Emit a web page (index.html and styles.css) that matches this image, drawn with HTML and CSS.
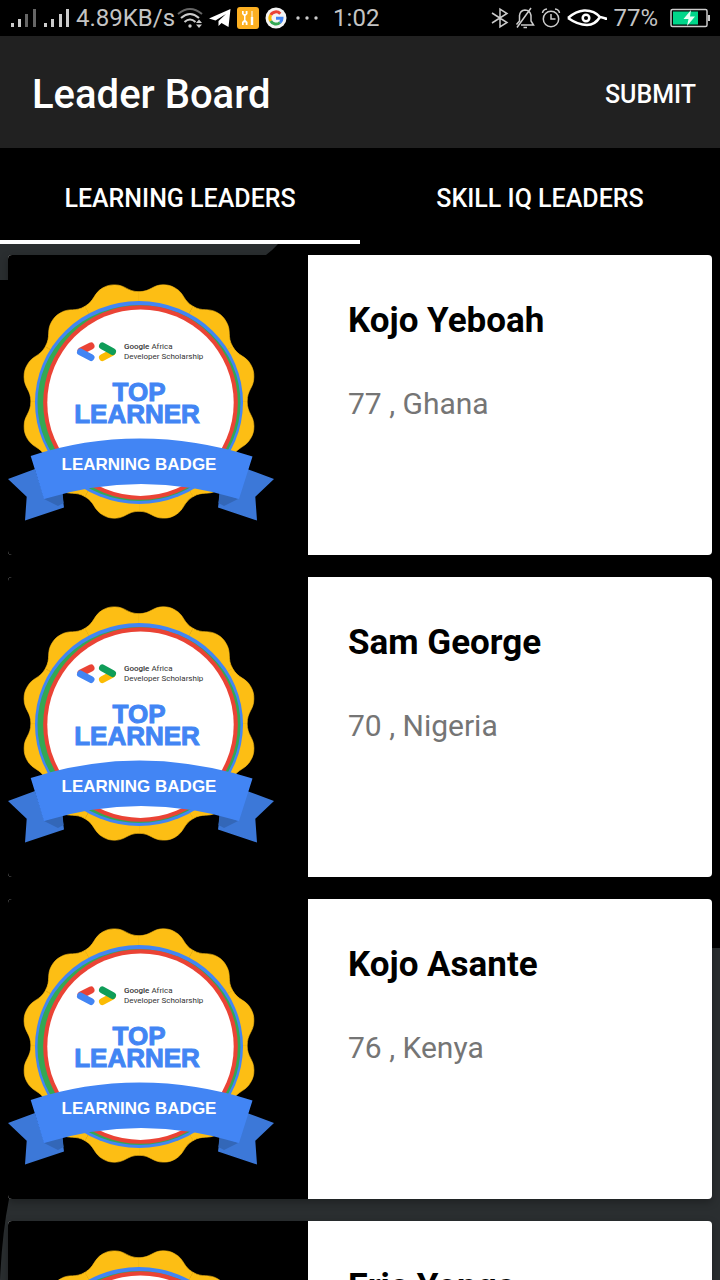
FILE: index.html
```
<!DOCTYPE html>
<html lang="en">
<head>
<meta charset="utf-8">
<meta name="viewport" content="width=device-width, initial-scale=1">
<title>Leader Board</title>
<link rel="stylesheet" href="styles.css">
</head>
<body>
<svg class="defs" aria-hidden="true">
  <defs>
    <path id="lobe" d="M0 0V-111.5C12 -111.5 14 -118.5 25 -118.5C30 -118.5 33.3 -117.6 37.6 -115C47.1 -109.6 45.3 -102.5 55.7 -96.6Z"/>
    <g id="tail">
      <path fill="#3c78d8" d="M0 224L27 214L36 242L54 237L56 252.500L17 265.500L18.700 241.700Z"/>
      <path fill="#3367b8" d="M36 244L54.500 237L55.500 248L50 251Z"/>
    </g>
    <symbol id="badge" viewBox="0 0 300 300">
      <g fill="#fdbe14" stroke="#fdbe14" stroke-width=".6" transform="translate(131 146.500) scale(.97 .985)">
        <use href="#lobe"/><use href="#lobe" transform="rotate(30)"/><use href="#lobe" transform="rotate(60)"/><use href="#lobe" transform="rotate(90)"/><use href="#lobe" transform="rotate(120)"/><use href="#lobe" transform="rotate(150)"/><use href="#lobe" transform="rotate(180)"/><use href="#lobe" transform="rotate(210)"/><use href="#lobe" transform="rotate(240)"/><use href="#lobe" transform="rotate(270)"/><use href="#lobe" transform="rotate(300)"/><use href="#lobe" transform="rotate(330)"/>
      </g>
      <ellipse cx="131" cy="147.500" rx="104" ry="101.500" fill="#4285f4"/>
      <ellipse cx="131" cy="148" rx="101.500" ry="98" fill="#34a853"/>
      <circle cx="132.500" cy="147.500" r="97.300" fill="#ea4335"/>
      <circle cx="132.500" cy="147.700" r="93.200" fill="#fff"/>
      <g fill="none" stroke-width="7" stroke-linecap="round">
        <path stroke="#fbbc04" d="M94.500 102.500L104 97.500"/>
        <path stroke="#0f9d58" d="M94.500 91L104.500 96.500"/>
        <path stroke="#ea4335" d="M83 91L73 96"/>
        <path stroke="#4285f4" d="M72.500 97L83 102.500"/>
      </g>
      <text class="badge-small" x="116" y="94"><tspan class="badge-strong">Google</tspan> Africa</text>
      <text class="badge-small" x="116" y="104">Developer Scholarship</text>
      <text class="badge-title" x="131" y="146">TOP</text>
      <text class="badge-title" x="129" y="168">LEARNER</text>
      <use href="#tail"/>
      <use href="#tail" transform="translate(266 0) scale(-1 1)"/>
      <path fill="#4285f4" d="M22.700 201Q131 166 244.500 201.500L231 244Q133 214 36 244Z"/>
      <text class="badge-ribbon" x="131" y="215">LEARNING BADGE</text>
    </symbol>
  </defs>
</svg>

<div class="screen">
  <div class="status">
    <div class="status-left">
      <svg width="60" height="20" viewBox="0 0 60 20" fill="#ccc" aria-hidden="true">
        <path d="M1 15h3v4H1zM8 11h3v8H8zM34 15h3v4h-3zM41 11h3v8h-3zM49 6h3v13h-3zM56 1h3v18h-3z"/>
        <path fill="#666" d="M15 6h3v13h-3zM23 1h3v18h-3z"/>
      </svg>
      <span class="speed">4.89KB/s</span>
      <svg width="26" height="22" viewBox="0 0 26 22" fill="none" stroke="#ccc" stroke-width="2" aria-hidden="true">
        <path stroke="#666" d="M1 7Q13 -3 25 7"/>
        <path d="M4 11Q13 3 22 11M7.500 15Q13 10 18.500 15"/>
        <circle cx="13" cy="19" r="1.700" fill="#ccc" stroke="none"/>
        <path fill="#ccc" stroke="none" d="M19 16l3-3.500 3 3.500zM19 17.500l3 3.500 3-3.500z"/>
      </svg>
      <svg width="22" height="20" viewBox="0 0 22 20" aria-hidden="true"><path fill="#fff" d="M0 10.500L21.500 1L19.500 19L12.500 15L9.500 18V13L17 6L6.500 12.500Z"/></svg>
      <svg width="22" height="22" viewBox="0 0 22 22" aria-hidden="true">
        <rect width="22" height="22" rx="3" fill="#fdb022"/>
        <path fill="#fff" d="M5 4v3l2 2v4L5 15v3h1.700v-2.500h2V18h1.800v-3l-2-2V9l2-2V4H8.700v3h-2V4zM14.500 4h1v6h-1zM13.800 10h2.400v8h-2.400z"/>
      </svg>
      <svg width="22" height="22" viewBox="0 0 22 22" fill="none" stroke-width="3" aria-hidden="true">
        <circle cx="11" cy="11" r="10.500" fill="#f4f4f4"/>
        <path stroke="#ea4335" d="M5.700 8A6 6 0 0 1 15.300 6.700"/>
        <path stroke="#fbbc05" d="M5.700 8A6 6 0 0 0 5.700 14"/>
        <path stroke="#34a853" d="M5.700 14A6 6 0 0 0 15 15.500"/>
        <path stroke="#4285f4" d="M11 11.200H17Q17 14 15 15.500"/>
      </svg>
      <svg class="more" width="24" height="22" viewBox="0 0 24 22" fill="#ccc" aria-hidden="true"><circle cx="3" cy="11" r="1.700"/><circle cx="12" cy="11" r="1.700"/><circle cx="21" cy="11" r="1.700"/></svg>
      <time>1:02</time>
    </div>
    <div class="status-right">
      <svg width="18" height="22" viewBox="0 0 18 22" fill="none" stroke="#ccc" stroke-width="1.500" aria-hidden="true"><path d="M1 6L16 15.500L9 20V2L16 6.500L1 16"/></svg>
      <svg width="20" height="22" viewBox="0 0 20 22" fill="none" stroke="#ccc" stroke-width="1.500" aria-hidden="true"><path d="M6 18H18.500L16 14V8.500Q15 3 10 3Q5 3.500 4.500 8.500V14L1.500 17.500M8.500 20.500H12M16 1L2 20.500"/></svg>
      <svg width="20" height="22" viewBox="0 0 20 22" fill="none" stroke="#ccc" stroke-width="1.500" aria-hidden="true"><circle cx="10" cy="12" r="7.700"/><path d="M10 7V12H14.500M1.500 6Q2 2.500 6 2M18.500 6Q18 2.500 14 2"/></svg>
      <svg width="40" height="22" viewBox="0 0 40 22" fill="none" stroke="#fff" stroke-width="2.500" aria-hidden="true"><path d="M1 11Q9 4 17 3.500Q27 3 33 10L39 11.500V13M1 11Q11 18 20 18Q28 18 33 10"/><circle cx="19" cy="11" r="3.300"/></svg>
      <span>77%</span>
      <svg class="battery" width="40" height="20" viewBox="0 0 40 20" aria-hidden="true">
        <rect x="1" y="1.500" width="36" height="17" rx="1.500" fill="none" stroke="#ccc" stroke-width="1.500"/>
        <path fill="#00d68a" d="M3 3.500h25v13H3z"/><path fill="#ccc" d="M38 7h2v6h-2z"/>
        <path fill="#e4fff4" d="M21 2L13.500 11H18.500L17 18L25 8.500H20Z"/>
      </svg>
    </div>
  </div>

  <header class="appbar">
    <h1>Leader Board</h1>
    <button type="button">SUBMIT</button>
  </header>

  <nav class="tabs">
    <a class="tab tab-active" href="#learning" aria-current="page">LEARNING LEADERS</a>
    <a class="tab" href="#skill">SKILL IQ LEADERS</a>
  </nav>

  <main class="content" id="learning">
    <svg class="backdrop" viewBox="0 0 720 1036" preserveAspectRatio="none" aria-hidden="true">
      <path fill="#2a2e30" d="M0 0H278Q272 7 262 14V36H0ZM720 704V1036H0Q2 990 9 955L40 704Z"/>
    </svg>
    <ul class="list">
      <li class="card">
        <svg class="badge" role="img" aria-label="Top Learner badge"><use href="#badge"/></svg>
        <div class="info"><h2>Kojo Yeboah</h2><p>77 , Ghana</p></div>
      </li>
      <li class="card">
        <svg class="badge" role="img" aria-label="Top Learner badge"><use href="#badge"/></svg>
        <div class="info"><h2>Sam George</h2><p>70 , Nigeria</p></div>
      </li>
      <li class="card">
        <svg class="badge" role="img" aria-label="Top Learner badge"><use href="#badge"/></svg>
        <div class="info"><h2>Kojo Asante</h2><p>76 , Kenya</p></div>
      </li>
      <li class="card">
        <svg class="badge" role="img" aria-label="Top Learner badge"><use href="#badge"/></svg>
        <div class="info"><h2>Eric Yonga</h2></div>
      </li>
    </ul>
  </main>
</div>
</body>
</html>
```
FILE: styles.css
```
* { box-sizing: border-box; }
body { margin: 0; background: #000; font-family: Roboto, "Noto Sans", sans-serif; }
h1, h2, p { margin: 0; }
.defs { position: absolute; width: 0; height: 0; }

.screen { display: flex; flex-direction: column; height: 100vh; overflow: hidden; }

.status {
  display: flex; justify-content: space-between; align-items: center;
  height: 36px; padding: 0 10px; flex: none;
  color: #c4c4c4; font-size: 24px; line-height: 36px;
}
.status svg { flex: none; }
.status-left, .status-right { display: flex; align-items: center; gap: 6px; }
.status .speed { margin-right: -4px; }
.status .more { margin-left: 2px; }
.status-left time { margin-left: 8px; }
.status .battery { margin-left: 6px; }

.appbar {
  display: flex; justify-content: space-between; align-items: center;
  height: 112px; padding: 6px 24px 0 32px; flex: none;
  background: #212121; color: #fff;
}
.appbar h1 { font-size: 40px; font-weight: 500; line-height: 48px; }
.appbar button {
  padding: 0; border: 0; background: none; color: #fff;
  font-family: inherit; font-size: 25px; font-weight: 500; line-height: 32px;
}

.tabs { display: grid; grid-template-columns: 1fr 1fr; height: 96px; flex: none; }
.tab {
  display: flex; align-items: center; justify-content: center;
  padding-top: 8px; border-bottom: 4px solid transparent;
  color: #fff; font-size: 25px; font-weight: 500; text-decoration: none;
}
.tab-active { border-bottom-color: #fff; }

.content { position: relative; flex: 1; min-height: 0; overflow: hidden; }
.backdrop { position: absolute; inset: 0; width: 100%; height: 100%; }
.list {
  position: relative; display: flex; flex-direction: column; gap: 22px;
  height: 100%; margin: 0; padding: 11px 8px; list-style: none;
  overflow-y: auto; scrollbar-width: none;
}
.card {
  display: flex; flex: none; overflow: hidden;
  border-radius: 4px; background: #fff; box-shadow: 0 3px 8px rgba(0, 0, 0, .3);
}
.badge { width: 300px; height: 300px; flex: none; background: #000; }
.badge-small { font: 8px Roboto, sans-serif; fill: #333; }
.badge-strong { font-weight: 500; }
.badge-title {
  font: bold 26px "Liberation Sans", sans-serif; text-anchor: middle;
  fill: #4285f4; stroke: #4285f4; stroke-width: 1px;
}
.badge-ribbon { font: bold 17px "Liberation Sans", sans-serif; fill: #fff; text-anchor: middle; }

.info { flex: 1; min-width: 0; padding: 44px 40px; }
.info h2 { color: #000; font-size: 35px; font-weight: 700; line-height: 44px; }
.info p { margin-top: 40px; color: #757575; font-size: 30px; line-height: 42px; }
```
